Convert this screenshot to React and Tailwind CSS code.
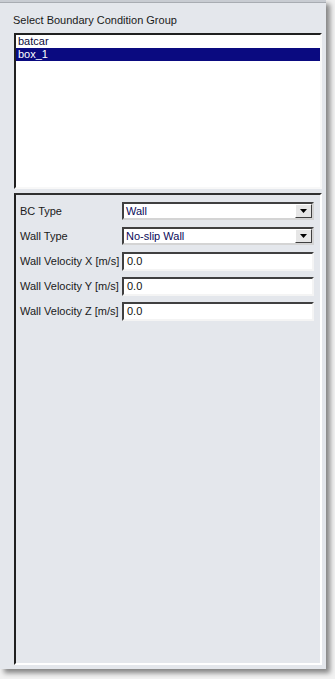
import { useState } from 'react';

const font = { fontFamily: '"Liberation Sans", Arial, sans-serif' };

function Arrow() {
  return (
    <div className="w-[17px] h-full bg-[#e6e6e6] border border-t-white border-l-white border-r-[#404040] border-b-[#404040] flex items-center justify-center">
      <svg width="7" height="4" viewBox="0 0 7 4">
        <path d="M0 0h7L3.5 4z" fill="#000" />
      </svg>
    </div>
  );
}

function Select({ value }) {
  return (
    <div className="flex-1 h-[18px] bg-white border-2 border-t-[#404040] border-l-[#404040] border-r-[#d4d4d4] border-b-[#d4d4d4] flex items-center">
      <span className="flex-1 pl-[2px] text-[#0b0b5a] leading-none">{value}</span>
      <Arrow />
    </div>
  );
}

function Field({ value }) {
  return (
    <div className="flex-1 h-[19px] bg-white border-2 border-t-[#404040] border-l-[#404040] border-r-[#f4f4f4] border-b-[#f4f4f4] flex items-center">
      <span className="pl-[3px] text-[#111] leading-none">{value}</span>
    </div>
  );
}

export default function App() {
  const [selected, setSelected] = useState('box_1');
  const groups = ['batcar', 'box_1'];
  const rows = [
    { label: 'BC Type', kind: 'select', value: 'Wall' },
    { label: 'Wall Type', kind: 'select', value: 'No-slip Wall' },
    { label: 'Wall Velocity X [m/s]', kind: 'field', value: '0.0' },
    { label: 'Wall Velocity Y [m/s]', kind: 'field', value: '0.0' },
    { label: 'Wall Velocity Z [m/s]', kind: 'field', value: '0.0' },
  ];

  return (
    <div className="w-[335px] h-[679px] bg-[#f2f2f2] text-[11px] text-[#1a1a1a]" style={font}>
      <div className="w-[326px] h-[669px] bg-[#e4e7ec] flex flex-col shadow-[4px_4px_5px_rgba(0,0,0,0.45)]">
        <div className="h-[3px] bg-[#c8ccd2] border-b border-[#a8acb2]" />
        <div className="flex-1 flex flex-col pl-[14px] pr-[4px] pb-[4px]">
          <div className="pt-[11px] h-[30px] leading-[13px] -ml-px">Select Boundary Condition Group</div>
          <div className="h-[156px] bg-white border-2 border-t-[#202020] border-l-[#202020] border-r-[#f8f8f8] border-b-[#f8f8f8]">
            {groups.map((g) => (
              <div
                key={g}
                onClick={() => setSelected(g)}
                className={`h-[13px] leading-[13px] pl-[2px] ${selected === g ? 'bg-[#0a0a80] text-white' : 'text-[#0b0b3a]'}`}
              >
                {g}
              </div>
            ))}
          </div>
          <div className="mt-[4px] flex-1 border-2 border-t-[#303030] border-l-[#202020] border-r-white border-b-white flex flex-col pt-[7px] pl-[4px] pr-[6px]">
            {rows.map((r) => (
              <div key={r.label} className="h-[25px] flex items-start">
                <div className="w-[102px] shrink-0 h-[18px] flex items-center">{r.label}</div>
                {r.kind === 'select' ? <Select value={r.value} /> : <Field value={r.value} />}
              </div>
            ))}
          </div>
        </div>
      </div>
    </div>
  );
}
